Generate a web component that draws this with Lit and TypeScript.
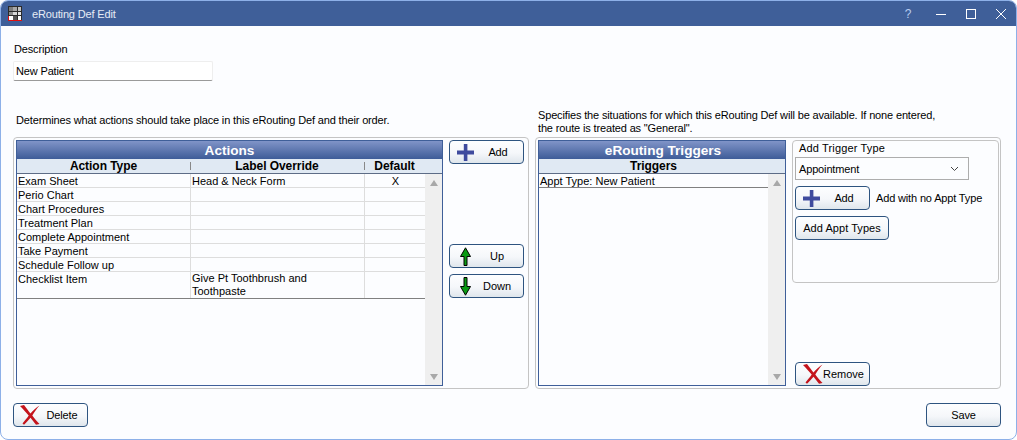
import { LitElement, html, css } from "lit";
import { customElement } from "lit/decorators.js";

const plus = html`<svg class="ic" width="17" height="17" viewBox="0 0 17 17"><path d="M6.8 0h3.6v6.6H17v3.8h-6.6V17H6.8v-6.6H0V6.6h6.8z" fill="#3f4b9e"/></svg>`;
const up = html`<svg class="ic" width="11" height="19" viewBox="0 0 11 19"><path d="M5.5 .8 10.5 9.5H7V18.5H4V9.5H.5z" fill="#0a9a14" stroke="#000" stroke-width="1"/></svg>`;
const down = html`<svg class="ic" width="11" height="19" viewBox="0 0 11 19"><path d="M5.5 18.2 10.5 9.5H7V.5H4V9.5H.5z" fill="#0a9a14" stroke="#000" stroke-width="1"/></svg>`;
const cross = html`<svg class="ic" width="20" height="20" viewBox="0 0 20 20"><path d="M0 1 4 0C7 4 9 6.5 10.5 8.5 13 5.5 16 2.5 19.5 .5 16.5 4 14 7.5 12.3 10.5 14.5 13.5 17 16.5 19.5 19L16 19.8C14 17.5 12.5 15 10.5 12.8 8.5 15 6.5 17.5 4 19.8L2.5 18.5C5 15.5 7 13 8.7 10.5 6 7.5 3.5 4.5 0 1Z" fill="#c4141c"/></svg>`;
const logo = html`<svg class="logo" width="14" height="15" viewBox="0 0 14 15" shape-rendering="crispEdges">
  <rect width="14" height="15" fill="#2b2b2b"/>
  <rect x="1" y="1" width="3.5" height="4" fill="#7d7d7d"/><rect x="5.2" y="1" width="3.6" height="4" fill="#a8a8a8"/><rect x="9.5" y="1" width="3.5" height="4" fill="#c4c4c4"/>
  <rect x="1" y="5.5" width="3.5" height="3.5" fill="#8c8c8c"/><rect x="5.2" y="5.5" width="3.6" height="3.5" fill="#d8d8d8"/><rect x="9.5" y="5.5" width="3.5" height="3.5" fill="#e4e4e4"/>
  <rect x="1" y="9.5" width="3.5" height="4" fill="#fff"/><rect x="5.2" y="9.5" width="3.6" height="4" fill="#555"/><rect x="9.5" y="9.5" width="3.5" height="4" fill="#fff"/>
  <rect y="14" width="14" height="1" fill="#e01010"/><rect width="1" height="5" y="10" fill="#e01010"/></svg>`;

const rows: [string, string, string][] = [
  ["Exam Sheet", "Head & Neck Form", "X"],
  ["Perio Chart", "", ""],
  ["Chart Procedures", "", ""],
  ["Treatment Plan", "", ""],
  ["Complete Appointment", "", ""],
  ["Take Payment", "", ""],
  ["Schedule Follow up", "", ""],
  ["Checklist Item", "Give Pt Toothbrush and Toothpaste", ""],
];

@customElement("app-root")
export class AppRoot extends LitElement {
  static styles = css`
    :host { display: block; width: 1017px; height: 440px; background: #fff; font: 11px "Liberation Sans", Arial, sans-serif; letter-spacing: -0.15px; color: #000; }
    * { box-sizing: border-box; }
    .window { width: 1017px; height: 440px; display: flex; flex-direction: column; background: #fcfdff; border: 1px solid #8db0e8; border-radius: 8px; overflow: hidden; }
    .title { height: 25px; flex: none; background: #3f5f99; color: #e6ecf6; display: flex; align-items: center; padding: 0 0 0 7px; }
    .title .name { margin-left: 10px; }
    .caps { margin-left: auto; display: flex; align-items: center; }
    .cap { width: 30px; height: 25px; display: flex; align-items: center; justify-content: center; color: #b8cdf0; font-size: 12px; }
    .cap.q { margin-right: 3px; }
    .body { flex: 1; display: flex; flex-direction: column; padding: 16px 15px 12px 12px; min-height: 0; }
    .lbl { height: 14px; line-height: 14px; margin-left: 1px; }
    .input { width: 200px; height: 20px; margin-top: 5px; background: #fff; border: 1px solid #eee; border-bottom: 1px solid #9a9a9a; border-radius: 2px; line-height: 18px; padding-left: 2px; }
    .panels { display: flex; gap: 6px; margin-top: 28px; }
    .col { display: flex; flex-direction: column; flex: none; }
    .col.l { width: 516px; }
    .col.r { width: 466px; }
    .note { height: 28px; line-height: 13px; display: flex; flex-direction: column; justify-content: flex-end; margin-left: 3px; padding-bottom: 2px; white-space: nowrap; }
    .col.l .note { padding-bottom: 10px; }
    .panel { height: 252px; border: 1px solid #c4c4c4; border-radius: 4px; padding: 2px; display: flex; gap: 6px; }
    .grid { height: 246px; border: 1px solid #3f5f99; background: #fcfdff; display: flex; flex-direction: column; flex: none; }
    .grid.a { width: 427px; }
    .grid.t { width: 248px; }
    .gtitle { height: 18px; flex: none; background: linear-gradient(#8094c8, #3e5c98); color: #fff; font-weight: 700; font-size: 13.6px; letter-spacing: 0; line-height: 19px; text-align: center; }
    .grid.t .gtitle { padding-left: 2px; }
    .ghead { height: 15px; flex: none; background: #e0e9f3; border-bottom: 1px solid #5d6c86; display: flex; font-weight: 700; font-size: 12px; letter-spacing: -0.05px; line-height: 15px; }
    .ghead > div { text-align: center; position: relative; }
    .ghead > div + div::before { content: ""; position: absolute; left: 0; top: 3px; bottom: 3px; width: 1px; background: #888; }
    .ghead .full { width: 229px; }
    .gbody { flex: 1; display: flex; min-height: 0; }
    .rows { flex: 1; min-width: 0; letter-spacing: 0; }
    .row { display: flex; height: 14px; border-bottom: 1px solid #ddd; line-height: 15px; }
    .row.tall { height: 27px; }
    .row.last { border-bottom: 1px solid #808080; }
    .row > div { padding-left: 1px; }
    .row > div + div { border-left: 1px solid #ddd; padding-left: 1px; }
    .row.tall .c2 { line-height: 13px; padding-right: 12px; }
    .c1 { width: 173px; flex: none; }
    .c2 { width: 174px; flex: none; }
    .c3 { width: 61px; flex: none; }
    .x { text-align: center; }
    .sb { width: 17px; flex: none; background: #efefef; display: flex; flex-direction: column; justify-content: space-between; align-items: center; padding: 6px 0 5px; }
    .tri { width: 0; height: 0; border-left: 4.5px solid transparent; border-right: 4.5px solid transparent; }
    .tri.u { border-bottom: 6px solid #a8a8a8; }
    .tri.d { border-top: 6px solid #a8a8a8; }
    .btn { width: 75px; height: 24px; flex: none; border: 1px solid #2e5480; border-radius: 4px; background: linear-gradient(#fdfeff 0%, #f5f7fa 55%, #dfe6ec 100%); display: flex; align-items: center; }
    .btn .t { flex: 1; text-align: center; }
    .btn .ic { flex: none; }
    .side { display: flex; flex-direction: column; }
    .side .m1 { margin-top: 80px; }
    .side .m2 { margin-top: 6px; }
    .i-plus { padding-left: 7px; padding-right: 1px; }
    .i-arrow { padding-left: 10px; }
    .i-arrow .t { letter-spacing: 0; }
    .del { padding-left: 6px; padding-right: 3px; }
    .rem { margin-left: 3px; padding-left: 7px; }
    .rem .t { text-align: left; letter-spacing: 0; }
    .sub { width: 207px; height: 143px; border: 1px solid #c4c4c4; border-radius: 4px; padding: 0 0 0 2px; display: flex; flex-direction: column; }
    .sub .cap2 { height: 15px; line-height: 14px; margin-left: 4px; letter-spacing: 0.15px; }
    .combo { width: 174px; height: 23px; border: 1px solid #adadad; background: #fcfdff; display: flex; align-items: center; justify-content: space-between; padding: 0 9px 0 3px; margin-top: 1px; }
    .subrow { display: flex; align-items: center; margin-top: 6px; gap: 6px; }
    .wide { width: 94px; margin-top: 6px; letter-spacing: 0.05px; }
    .rightcol { display: flex; flex-direction: column; justify-content: space-between; height: 246px; }
    .footer { display: flex; justify-content: space-between; margin-top: 14px; }
  `;

  render() {
    return html`<div class="window">
      <div class="title">${logo}<span class="name">eRouting Def Edit</span>
        <div class="caps">
          <div class="cap q">?</div>
          <div class="cap"><svg width="12" height="12"><path d="M1 6.5h10" stroke="#fff"/></svg></div>
          <div class="cap"><svg width="12" height="12"><rect x="1.5" y="1.5" width="9" height="9" fill="none" stroke="#fff"/></svg></div>
          <div class="cap"><svg width="12" height="12"><path d="M1 1l10 10M11 1L1 11" stroke="#fff" fill="none"/></svg></div>
        </div>
      </div>
      <div class="body">
        <div class="lbl">Description</div>
        <div class="input">New Patient</div>
        <div class="panels">
          <div class="col l">
            <div class="note"><div>Determines what actions should take place in this eRouting Def and their order.</div></div>
            <div class="panel">
              <div class="grid a">
                <div class="gtitle">Actions</div>
                <div class="ghead"><div class="c1">Action Type</div><div class="c2">Label Override</div><div class="c3">Default</div></div>
                <div class="gbody">
                  <div class="rows">
                    ${rows.map((r, i) => html`<div class="row ${i === rows.length - 1 ? "last tall" : ""}"><div class="c1">${r[0]}</div><div class="c2">${r[1]}</div><div class="c3 x">${r[2]}</div></div>`)}
                  </div>
                  <div class="sb"><div class="tri u"></div><div class="tri d"></div></div>
                </div>
              </div>
              <div class="side">
                <div class="btn i-plus">${plus}<span class="t">Add</span></div>
                <div class="btn i-arrow m1">${up}<span class="t">Up</span></div>
                <div class="btn i-arrow m2">${down}<span class="t">Down</span></div>
              </div>
            </div>
          </div>
          <div class="col r">
            <div class="note"><div>Specifies the situations for which this eRouting Def will be available. If none entered,</div><div>the route is treated as "General".</div></div>
            <div class="panel">
              <div class="grid t">
                <div class="gtitle">eRouting Triggers</div>
                <div class="ghead"><div class="full">Triggers</div></div>
                <div class="gbody">
                  <div class="rows"><div class="row last"><div>Appt Type: New Patient</div></div></div>
                  <div class="sb"><div class="tri u"></div><div class="tri d"></div></div>
                </div>
              </div>
              <div class="rightcol">
                <div class="sub">
                  <div class="cap2">Add Trigger Type</div>
                  <div class="combo"><span>Appointment</span><svg width="9" height="6"><path d="M1 1l3.5 3.5L8 1" fill="none" stroke="#444"/></svg></div>
                  <div class="subrow"><div class="btn i-plus">${plus}<span class="t">Add</span></div><span>Add with no Appt Type</span></div>
                  <div class="btn wide"><span class="t">Add Appt Types</span></div>
                </div>
                <div class="btn rem">${cross}<span class="t">Remove</span></div>
              </div>
            </div>
          </div>
        </div>
        <div class="footer">
          <div class="btn del">${cross}<span class="t">Delete</span></div>
          <div class="btn"><span class="t">Save</span></div>
        </div>
      </div>
    </div>`;
  }
}
